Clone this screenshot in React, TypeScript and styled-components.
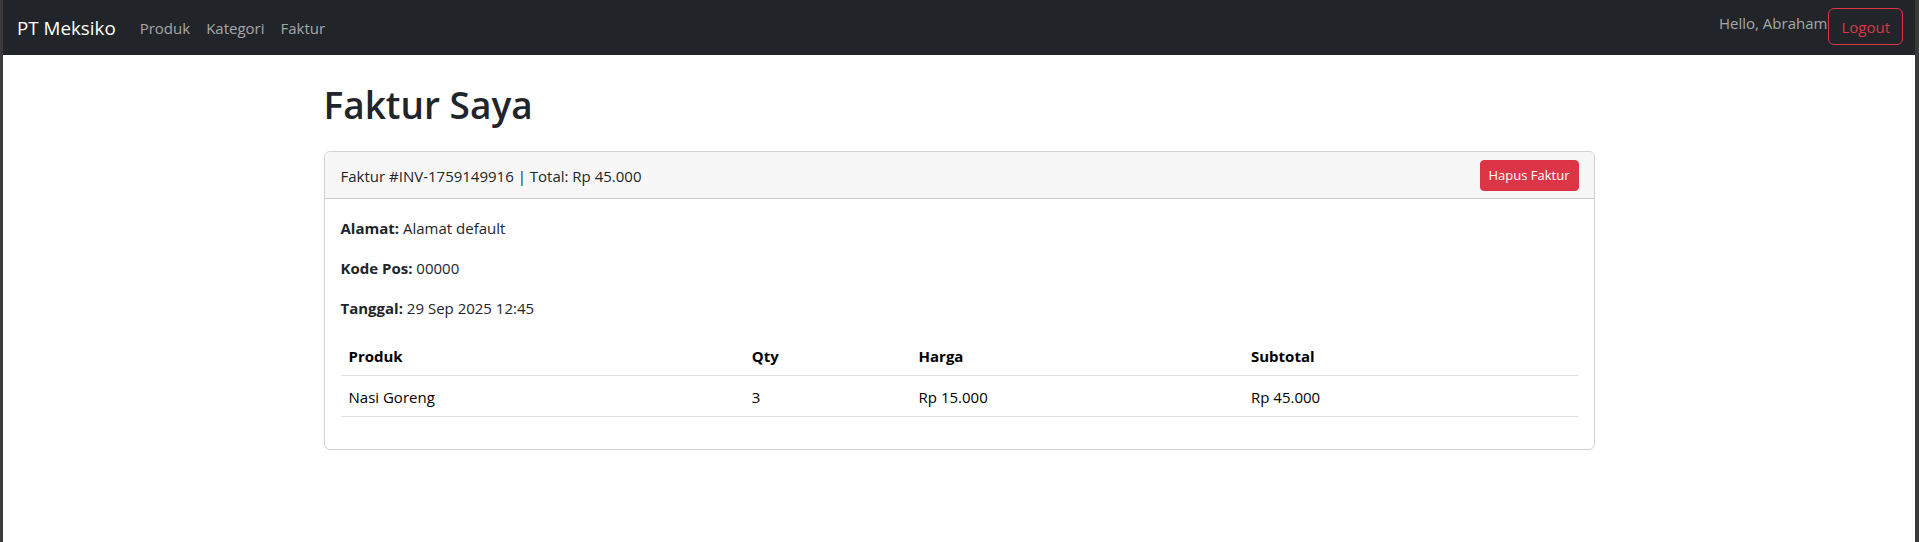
import React from "react";
import styled, { createGlobalStyle } from "styled-components";

const GlobalStyle = createGlobalStyle`
  html, body { margin: 0; padding: 0; background: #ffffff; }
  body {
    font-family: "Open Sans", "Noto Sans", sans-serif;
    font-size: 15px;
    line-height: 1.6;
    color: #212529;
  }
  * { box-sizing: border-box; }
`;

const Frame = styled.div`
  min-height: 100vh;
  border-left: 3px solid #3a3a3a;
  border-right: 4px solid #3a3a3a;
  background: #ffffff;
`;

const Navbar = styled.nav`
  height: 55px;
  background: #212529;
  padding: 0 12px 0 14px;
  display: flex;
  align-items: center;
`;

const Brand = styled.a`
  font-size: 18.8px;
  line-height: 30px;
  color: #ffffff;
  margin-right: 16px;
  text-decoration: none;
`;

const NavList = styled.div`
  display: flex;
  align-items: center;
`;

const NavLink = styled.a`
  padding: 8px;
  color: rgba(255, 255, 255, 0.6);
  text-decoration: none;
  line-height: 24px;
`;

const RightGroup = styled.div`
  margin-left: auto;
  align-self: flex-start;
  padding-top: 8px;
  display: flex;
  align-items: flex-start;
`;

const Hello = styled.span`
  color: rgba(255, 255, 255, 0.6);
  line-height: 24px;
  padding-top: 3px;
  margin-right: 1px;
`;

const LogoutButton = styled.button`
  height: 37px;
  padding: 0 12px;
  font: inherit;
  font-size: 15px;
  color: #dc3545;
  background: transparent;
  border: 1px solid #dc3545;
  border-radius: 6px;
  display: flex;
  align-items: center;
`;

const Container = styled.main`
  width: 1271px;
  margin: 24px auto 0;
`;

const Title = styled.h1`
  font-size: 37px;
  font-weight: 600;
  line-height: 48px;
  margin: 0 0 24px;
  padding-top: 2px;
  height: 48px;
  color: #212529;
`;

const Card = styled.section`
  border: 1px solid rgba(0, 0, 0, 0.175);
  border-radius: 6px;
  overflow: hidden;
`;

const CardHeader = styled.div`
  background: #f7f7f7;
  border-bottom: 1px solid rgba(0, 0, 0, 0.175);
  padding: 8px 15px 7px 16px;
  display: flex;
  align-items: center;
  justify-content: space-between;
`;

const HeaderText = styled.span`
  padding-top: 1px;
`;

const DangerButton = styled.button`
  font: inherit;
  font-size: 13px;
  line-height: 21px;
  padding: 4px 8px;
  color: #ffffff;
  background: #dc3545;
  border: 1px solid #dc3545;
  border-radius: 4px;
`;

const CardBody = styled.div`
  padding: 16px;
`;

const InfoLine = styled.p`
  margin: 0 0 16px;
  line-height: 24px;
  padding-top: 1px;
  height: 24px;
`;

const Label = styled.strong`
  font-weight: 700;
`;

const Table = styled.table`
  width: 100%;
  border-collapse: collapse;
  margin-bottom: 16px;
  color: #000000;
`;

const Th = styled.th<{ $w: number }>`
  width: ${(p) => p.$w}px;
  text-align: left;
  font-weight: 700;
  padding: 9px 8px 7px;
  line-height: 24px;
  border-bottom: 1px solid #dee2e6;
`;

const Td = styled.td`
  padding: 9px 8px 7px;
  line-height: 24px;
  border-bottom: 1px solid #dee2e6;
`;

const columns = [
  { label: "Produk", w: 404 },
  { label: "Qty", w: 167 },
  { label: "Harga", w: 333 },
  { label: "Subtotal", w: 335 },
];

const items = [{ name: "Nasi Goreng", qty: 3, price: "Rp 15.000", subtotal: "Rp 45.000" }];

export default function App() {
  return (
    <>
      <GlobalStyle />
      <Frame>
        <Navbar>
          <Brand href="#">PT Meksiko</Brand>
          <NavList>
            <NavLink href="#">Produk</NavLink>
            <NavLink href="#">Kategori</NavLink>
            <NavLink href="#">Faktur</NavLink>
          </NavList>
          <RightGroup>
            <Hello>Hello, Abraham</Hello>
            <LogoutButton>Logout</LogoutButton>
          </RightGroup>
        </Navbar>
        <Container>
          <Title>Faktur Saya</Title>
          <Card>
            <CardHeader>
              <HeaderText>Faktur #INV-1759149916 | Total: Rp 45.000</HeaderText>
              <DangerButton>Hapus Faktur</DangerButton>
            </CardHeader>
            <CardBody>
              <InfoLine>
                <Label>Alamat:</Label> Alamat default
              </InfoLine>
              <InfoLine>
                <Label>Kode Pos:</Label> 00000
              </InfoLine>
              <InfoLine>
                <Label>Tanggal:</Label> 29 Sep 2025 12:45
              </InfoLine>
              <Table>
                <thead>
                  <tr>
                    {columns.map((c) => (
                      <Th key={c.label} $w={c.w}>
                        {c.label}
                      </Th>
                    ))}
                  </tr>
                </thead>
                <tbody>
                  {items.map((it) => (
                    <tr key={it.name}>
                      <Td>{it.name}</Td>
                      <Td>{it.qty}</Td>
                      <Td>{it.price}</Td>
                      <Td>{it.subtotal}</Td>
                    </tr>
                  ))}
                </tbody>
              </Table>
            </CardBody>
          </Card>
        </Container>
      </Frame>
    </>
  );
}
